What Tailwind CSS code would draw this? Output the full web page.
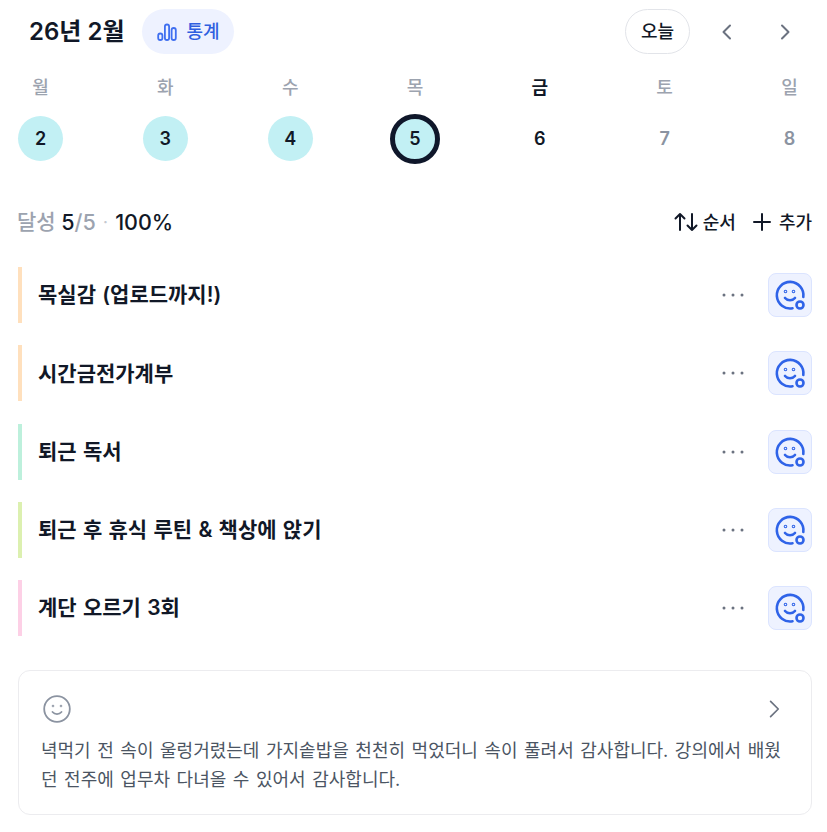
<!DOCTYPE html>
<html lang="ko"><head><meta charset="utf-8">
<script src="https://cdn.jsdelivr.net/npm/@tailwindcss/browser@4"></script>
</head>
<body class="bg-white">
<div class="w-[827px] h-[832px] overflow-hidden pl-[18px] pr-[15px] font-['Inter','Noto_Sans_CJK_KR',sans-serif] text-[#111827]">
  <div class="flex items-center h-[45px] mt-[9px]">
    <h1 class="ml-[11px] text-[24px] font-semibold leading-none">26년 2월</h1>
    <button class="ml-[18px] h-[45px] w-[92px] rounded-full bg-[#eef2ff] flex items-center justify-center gap-[9px] text-[#2f5fe0] text-[18px] font-medium">
      <svg width="20" height="20" viewBox="0 0 20 20" fill="none" stroke="#3f6ff0" stroke-width="1.8"><rect x="1.2" y="11.5" width="4.2" height="6.5" rx="2.1"/><rect x="7.9" y="2.5" width="4.2" height="15.5" rx="2.1"/><rect x="14.6" y="6" width="4.2" height="12" rx="2.1"/></svg>
      <span>통계</span>
    </button>
    <button class="ml-auto h-[45px] w-[65px] rounded-full border border-[#e2e4e9] bg-white text-[18px] font-medium">오늘</button>
    <button class="ml-[25px] w-[24px] h-[24px] flex items-center justify-center"><svg width="24" height="24" viewBox="0 0 24 24" fill="none" stroke="#6b7280" stroke-width="2" stroke-linecap="round" stroke-linejoin="round"><path d="M15 5.500 8.500 12l6.500 6.500"/></svg></button>
    <button class="ml-[34px] mr-[15px] w-[24px] h-[24px] flex items-center justify-center"><svg width="24" height="24" viewBox="0 0 24 24" fill="none" stroke="#6b7280" stroke-width="2" stroke-linecap="round" stroke-linejoin="round"><path d="M9 5.500l6.500 6.500L9 18.500"/></svg></button>
  </div>

  <div class="flex justify-between mt-[22px]">
    <div class="w-[45px] flex flex-col items-center gap-[16px]"><span class="text-[18px] leading-[24px] font-medium text-[#9ca3af]">월</span><span class="w-[45px] h-[45px] rounded-full bg-[#c2f0f4] flex items-center justify-center text-[18px] font-semibold">2</span></div>
    <div class="w-[45px] flex flex-col items-center gap-[16px]"><span class="text-[18px] leading-[24px] font-medium text-[#9ca3af]">화</span><span class="w-[45px] h-[45px] rounded-full bg-[#c2f0f4] flex items-center justify-center text-[18px] font-semibold">3</span></div>
    <div class="w-[45px] flex flex-col items-center gap-[16px]"><span class="text-[18px] leading-[24px] font-medium text-[#9ca3af]">수</span><span class="w-[45px] h-[45px] rounded-full bg-[#c2f0f4] flex items-center justify-center text-[18px] font-semibold">4</span></div>
    <div class="w-[45px] flex flex-col items-center gap-[16px]"><span class="text-[18px] leading-[24px] font-medium text-[#9ca3af]">목</span><span class="w-[50px] h-[50px] -my-[2.500px] -mx-[2.500px] box-border border-[5px] border-[#0f172a] rounded-full bg-[#c2f0f4] flex items-center justify-center text-[18px] font-semibold">5</span></div>
    <div class="w-[45px] flex flex-col items-center gap-[16px]"><span class="text-[18px] leading-[24px] font-bold text-[#111827]">금</span><span class="w-[45px] h-[45px] rounded-full flex items-center justify-center text-[18px] font-semibold">6</span></div>
    <div class="w-[45px] flex flex-col items-center gap-[16px]"><span class="text-[18px] leading-[24px] font-medium text-[#9ca3af]">토</span><span class="w-[45px] h-[45px] rounded-full flex items-center justify-center text-[18px] font-semibold text-[#8b93a1]">7</span></div>
    <div class="w-[45px] flex flex-col items-center gap-[16px]"><span class="text-[18px] leading-[24px] font-medium text-[#9ca3af]">일</span><span class="w-[45px] h-[45px] rounded-full flex items-center justify-center text-[18px] font-semibold text-[#8b93a1]">8</span></div>
  </div>

  <div class="flex items-center justify-between mt-[46px] h-[30px]">
    <div class="text-[21.500px] font-medium flex items-center whitespace-pre -ml-px"><span class="text-[#9ca3af] text-[21px]">달성 </span><span>5</span><span class="text-[#9ca3af]">/5</span><span class="text-[#c4c9d1] text-[16px] mx-[3px]"> · </span><span>100%</span></div>
    <div class="flex items-center text-[18px] font-medium">
      <svg class="mr-[5px]" width="24" height="20" viewBox="0 0 24 20" fill="none" stroke="#111827" stroke-width="2" stroke-linecap="round" stroke-linejoin="round"><path d="M6 18V2M1.500 6.500 6 2l4.500 4.500"/><path d="M18 2v16M13.500 13.500 18 18l4.500-4.500"/></svg>
      <span>순서</span>
      <svg class="ml-[16px] mr-[7px]" width="20" height="20" viewBox="0 0 20 20" fill="none" stroke="#111827" stroke-width="2" stroke-linecap="round"><path d="M10 2v16M2 10h16"/></svg>
      <span>추가</span>
    </div>
  </div>

  <ul class="mt-[30px] flex flex-col gap-[22.300px]">
    <li class="flex items-center h-[56px] border-l-4 border-[#ffe0bd] pl-4 pr-0">
      <span class="text-[21px] [word-spacing:1px] font-semibold flex-1">목실감 (업로드까지!)</span>
      <svg width="24" height="6" viewBox="0 0 24 6" fill="#6b7280"><circle cx="3" cy="3" r="1.500"/><circle cx="12" cy="3" r="1.500"/><circle cx="21" cy="3" r="1.500"/></svg>
      <button class="ml-[23px] w-[44px] h-[44px] rounded-[8px] bg-[#eef2ff] border border-[#dbe4ff] flex items-center justify-center"><svg width="32" height="32" viewBox="0 0 32 32" fill="none" stroke="#2f63e8" stroke-width="2.600" stroke-linecap="round"><path d="M18.500 29.300A13.300 13.300 0 1 1 29.300 18"/><path d="M11 19c2.500 3 7.500 3 10 0"/><circle cx="26" cy="26" r="3.500"/><circle cx="11.500" cy="12.500" r=".5"/><circle cx="19.500" cy="12.500" r=".5"/></svg></button>
    </li>
    <li class="flex items-center h-[56px] border-l-4 border-[#ffe0bd] pl-4 pr-0">
      <span class="text-[21px] [word-spacing:1px] font-semibold flex-1">시간금전가계부</span>
      <svg width="24" height="6" viewBox="0 0 24 6" fill="#6b7280"><circle cx="3" cy="3" r="1.500"/><circle cx="12" cy="3" r="1.500"/><circle cx="21" cy="3" r="1.500"/></svg>
      <button class="ml-[23px] w-[44px] h-[44px] rounded-[8px] bg-[#eef2ff] border border-[#dbe4ff] flex items-center justify-center"><svg width="32" height="32" viewBox="0 0 32 32" fill="none" stroke="#2f63e8" stroke-width="2.600" stroke-linecap="round"><path d="M18.500 29.300A13.300 13.300 0 1 1 29.300 18"/><path d="M11 19c2.500 3 7.500 3 10 0"/><circle cx="26" cy="26" r="3.500"/><circle cx="11.500" cy="12.500" r=".5"/><circle cx="19.500" cy="12.500" r=".5"/></svg></button>
    </li>
    <li class="flex items-center h-[56px] border-l-4 border-[#bdf0dc] pl-4 pr-0">
      <span class="text-[21px] [word-spacing:1px] font-semibold flex-1">퇴근 독서</span>
      <svg width="24" height="6" viewBox="0 0 24 6" fill="#6b7280"><circle cx="3" cy="3" r="1.500"/><circle cx="12" cy="3" r="1.500"/><circle cx="21" cy="3" r="1.500"/></svg>
      <button class="ml-[23px] w-[44px] h-[44px] rounded-[8px] bg-[#eef2ff] border border-[#dbe4ff] flex items-center justify-center"><svg width="32" height="32" viewBox="0 0 32 32" fill="none" stroke="#2f63e8" stroke-width="2.600" stroke-linecap="round"><path d="M18.500 29.300A13.300 13.300 0 1 1 29.300 18"/><path d="M11 19c2.500 3 7.500 3 10 0"/><circle cx="26" cy="26" r="3.500"/><circle cx="11.500" cy="12.500" r=".5"/><circle cx="19.500" cy="12.500" r=".5"/></svg></button>
    </li>
    <li class="flex items-center h-[56px] border-l-4 border-[#dcf0b0] pl-4 pr-0">
      <span class="text-[21px] [word-spacing:1px] font-semibold flex-1">퇴근 후 휴식 루틴 &amp; 책상에 앉기</span>
      <svg width="24" height="6" viewBox="0 0 24 6" fill="#6b7280"><circle cx="3" cy="3" r="1.500"/><circle cx="12" cy="3" r="1.500"/><circle cx="21" cy="3" r="1.500"/></svg>
      <button class="ml-[23px] w-[44px] h-[44px] rounded-[8px] bg-[#eef2ff] border border-[#dbe4ff] flex items-center justify-center"><svg width="32" height="32" viewBox="0 0 32 32" fill="none" stroke="#2f63e8" stroke-width="2.600" stroke-linecap="round"><path d="M18.500 29.300A13.300 13.300 0 1 1 29.300 18"/><path d="M11 19c2.500 3 7.500 3 10 0"/><circle cx="26" cy="26" r="3.500"/><circle cx="11.500" cy="12.500" r=".5"/><circle cx="19.500" cy="12.500" r=".5"/></svg></button>
    </li>
    <li class="flex items-center h-[56px] border-l-4 border-[#fdd0e6] pl-4 pr-0">
      <span class="text-[21px] [word-spacing:1px] font-semibold flex-1">계단 오르기 3회</span>
      <svg width="24" height="6" viewBox="0 0 24 6" fill="#6b7280"><circle cx="3" cy="3" r="1.500"/><circle cx="12" cy="3" r="1.500"/><circle cx="21" cy="3" r="1.500"/></svg>
      <button class="ml-[23px] w-[44px] h-[44px] rounded-[8px] bg-[#eef2ff] border border-[#dbe4ff] flex items-center justify-center"><svg width="32" height="32" viewBox="0 0 32 32" fill="none" stroke="#2f63e8" stroke-width="2.600" stroke-linecap="round"><path d="M18.500 29.300A13.300 13.300 0 1 1 29.300 18"/><path d="M11 19c2.500 3 7.500 3 10 0"/><circle cx="26" cy="26" r="3.500"/><circle cx="11.500" cy="12.500" r=".5"/><circle cx="19.500" cy="12.500" r=".5"/></svg></button>
    </li>
  </ul>

  <section class="mt-[34px] h-[145px] rounded-[12px] border border-[#ececef] px-[24px] pt-[24px]">
    <div class="flex items-center justify-between h-[28px]">
      <svg width="28" height="28" viewBox="0 0 28 28" fill="none" stroke="#8b93a1" stroke-width="1.800" stroke-linecap="round"><circle cx="14" cy="14" r="12.800"/><path d="M9.500 17c2.300 2.700 6.700 2.700 9 0"/><circle cx="10" cy="11" r=".4"/><circle cx="18" cy="11" r=".4"/></svg>
      <svg class="mr-[1px]" width="24" height="24" viewBox="0 0 24 24" fill="none" stroke="#6b7280" stroke-width="2" stroke-linecap="round" stroke-linejoin="round"><path d="M8 3l9 9-9 9" transform="translate(12 12) scale(.85) translate(-12 -12)"/></svg>
    </div>
    <p class="mt-[13px] -ml-[2px] text-[18px] [word-spacing:1.500px] leading-[29px] text-[#4b5563]">녁먹기 전 속이 울렁거렸는데 가지솥밥을 천천히 먹었더니 속이 풀려서 감사합니다. 강의에서 배웠던 전주에 업무차 다녀올 수 있어서 감사합니다.</p>
  </section>
</div>
</body></html>
